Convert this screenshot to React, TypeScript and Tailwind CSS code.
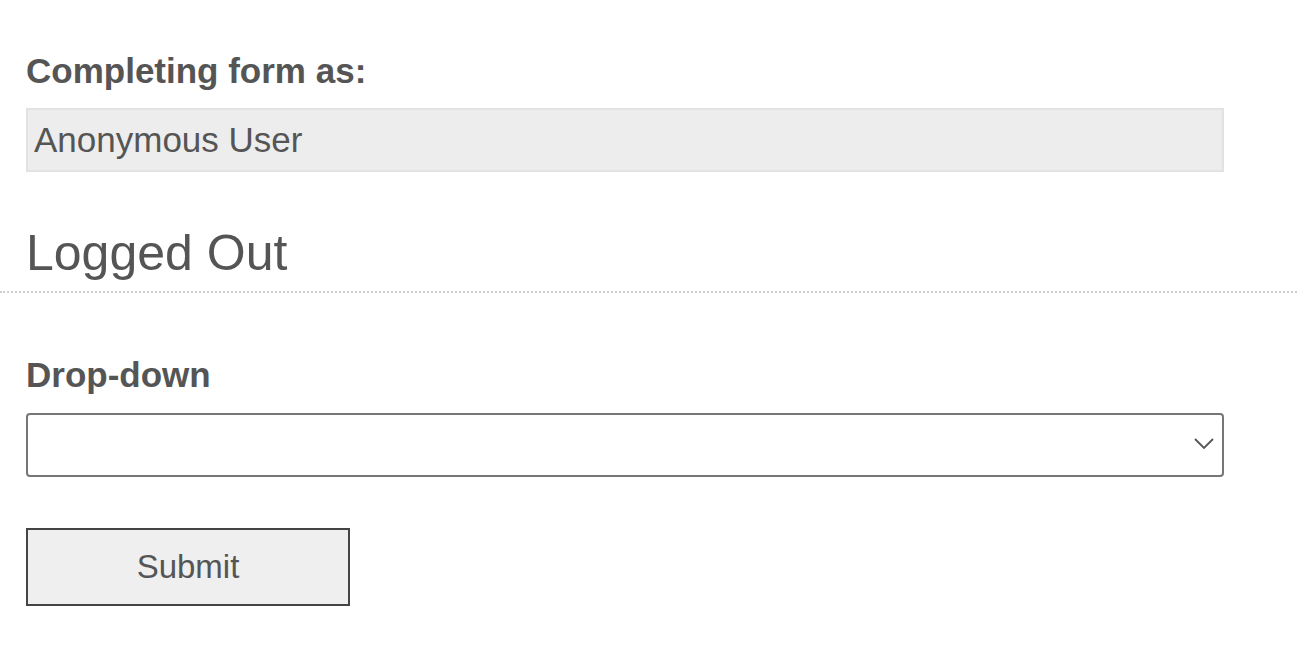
import { useState } from 'react';

const App = () => {
  const [choice, setChoice] = useState('');

  return (
    <div className="min-h-screen bg-white text-[#555555] font-['Liberation_Sans',Arial,sans-serif]">
      <form
        className="pt-[51px]"
        onSubmit={(e) => {
          e.preventDefault();
        }}
      >
        {/* 回答者 */}
        <div className="px-[26px]">
          <label className="block text-[35px] leading-[40px] font-bold">
            Completing form as:
          </label>
          <div className="mt-[17px] w-[1198px] h-[64px] flex items-center pl-[6px] bg-[#ededed] border-2 border-[#e2e2e2] text-[35px] leading-[40px]">
            Anonymous User
          </div>
        </div>

        {/* 見出し */}
        <div className="mt-[52px] px-[26px] pb-[9px] border-b-2 border-dotted border-[#cfcfcf]">
          <h2 className="text-[50px] leading-[58px] font-normal">Logged Out</h2>
        </div>

        <div className="px-[26px]">
          <label
            htmlFor="dropdown"
            className="block mt-[62px] text-[35px] leading-[40px] font-bold"
          >
            Drop-down
          </label>
          <div className="relative mt-[18px] w-[1198px]">
            <select
              id="dropdown"
              value={choice}
              onChange={(e) => setChoice(e.target.value)}
              className="appearance-none block w-full h-[64px] px-[8px] bg-white border-2 border-[#767676] rounded-[4px] text-[35px] text-[#555555] outline-none"
            >
              <option value=""></option>
              <option value="1">Option 1</option>
              <option value="2">Option 2</option>
            </select>
            {/* 矢印 */}
            <svg
              className="pointer-events-none absolute right-[10px] top-[25px]"
              width="20"
              height="12"
              viewBox="0 0 20 12"
              fill="none"
            >
              <path d="M1 1 L10 10 L19 1" stroke="#555555" strokeWidth="1.8" />
            </svg>
          </div>

          <button
            type="submit"
            className="mt-[51px] w-[324px] h-[78px] bg-[#efefef] border-2 border-[#444444] text-[33px] leading-[40px] text-[#555555]"
          >
            Submit
          </button>
        </div>
      </form>
    </div>
  );
};

export default App;
